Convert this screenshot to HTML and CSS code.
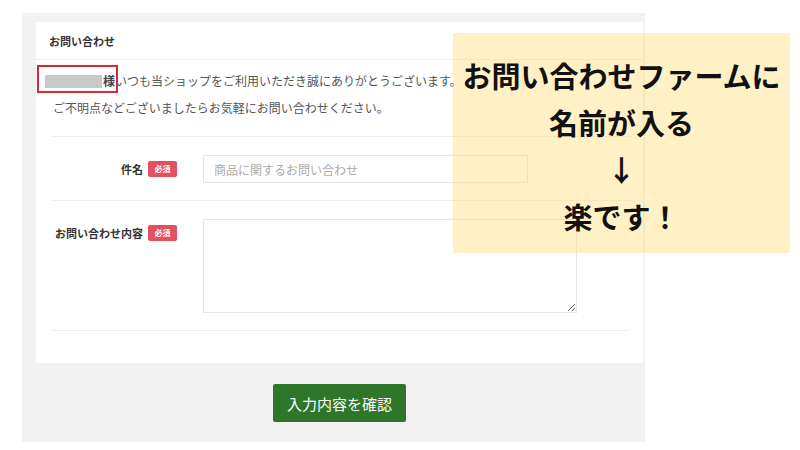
FILE: index.html
```html
<!DOCTYPE html>
<html lang="ja">
<head>
    <meta charset="UTF-8">
    <title>お問い合わせ</title>
    <link rel="stylesheet" href="styles.css">
</head>
<body>
    <div class="panel">
        <div class="card">
            <div class="card-head">お問い合わせ</div>

            <div class="intro">
                <p class="line first">
                    <span class="name-box"></span><b>様</b>いつも当ショップをご利用いただき誠にありがとうございます。
                    <span class="mark"></span>
                </p>
                <p class="line second">ご不明点などございましたらお気軽にお問い合わせください。</p>
            </div>

            <div class="form">
                <div class="row">
                    <div class="label">件名<span class="req">必須</span></div>
                    <input type="text" class="field" placeholder="商品に関するお問い合わせ">
                </div>
                <div class="row">
                    <div class="label">お問い合わせ内容<span class="req">必須</span></div>
                    <textarea class="area"></textarea>
                </div>
            </div>
        </div>

        <div class="actions">
            <button class="submit">入力内容を確認</button>
        </div>
    </div>

    <!-- annotation over the screenshot -->
    <div class="note">
        <p>お問い合わせファームに</p>
        <p>名前が入る</p>
        <p>↓</p>
        <p>楽です！</p>
    </div>
</body>
</html>
```

FILE: styles.css
```css
body {
    margin: 0;
    background: #fff;
    font-family: "Noto Sans CJK JP", "Liberation Sans", sans-serif;
    color: #555;
}
p {
    margin: 0;
}
.panel {
    margin: 13px 0 0 22px;
    width: 623px;
    height: 429px;
    padding: 9px 2px 0 14px;
    box-sizing: border-box;
    background: #f2f2f2;
}
.card {
    background: #fff;
    height: 341px;
    box-sizing: border-box;
}
.card-head {
    height: 38px;
    line-height: 38px;
    padding-left: 13px;
    font-size: 11px;
    font-weight: bold;
    color: #333;
    border-bottom: 1px solid #eee;
    box-sizing: border-box;
}
.intro {
    padding: 7px 0 0 9px;
    height: 69px;
    font-size: 12px;
}
.line {
    line-height: 27px;
}
.first {
    position: relative;
    height: 27px;
}
.second {
    margin-left: 8px;
}
.name-box {
    display: inline-block;
    width: 57px;
    height: 13px;
    vertical-align: -2px;
    background: #c9c9c9;
    margin-right: 1px;
}
.first b {
    color: #444;
}
.mark {
    position: absolute;
    left: -8px;
    top: -2px;
    width: 77px;
    height: 24px;
    border: 2px solid #d42a35;
}
.form {
    margin: 0 13px 0 16px;
}
.row {
    display: flex;
    align-items: flex-start;
    padding: 18px 0 17px;
    border-top: 1px solid #eee;
}
.row:last-child {
    border-bottom: 1px solid #eee;
}
.label {
    width: 125px;
    height: 28px;
    display: flex;
    align-items: center;
    justify-content: flex-end;
    font-size: 11px;
    font-weight: bold;
    color: #333;
    margin-right: 26px;
    flex-shrink: 0;
}
.req {
    display: inline-block;
    width: 29px;
    height: 16px;
    line-height: 16px;
    margin-left: 5px;
    background: #e2515f;
    color: #fff;
    font-size: 8px;
    text-align: center;
    border-radius: 2px;
}
.field {
    width: 325px;
    height: 28px;
    box-sizing: border-box;
    border: 1px solid #e6e6e6;
    padding: 0 10px;
    font-size: 12px;
    font-family: inherit;
    outline: none;
}
.field::placeholder {
    color: #aaa;
}
.area {
    width: 374px;
    height: 94px;
    box-sizing: border-box;
    border: 1px solid #e6e6e6;
    resize: vertical;
    outline: none;
    margin: 0;
}
.actions {
    display: flex;
    justify-content: center;
    padding-top: 21px;
}
.submit {
    width: 133px;
    height: 38px;
    background: #2e7629;
    color: #fff;
    border: none;
    border-radius: 2px;
    font-size: 15px;
    font-family: inherit;
    cursor: pointer;
}
.note {
    position: absolute;
    left: 453px;
    top: 33px;
    width: 337px;
    height: 220px;
    padding-top: 19px;
    box-sizing: border-box;
    background: rgba(255, 220, 120, 0.42);
    text-align: center;
    font-size: 29px;
    font-weight: bold;
    line-height: 47px;
    color: #111;
}
```
